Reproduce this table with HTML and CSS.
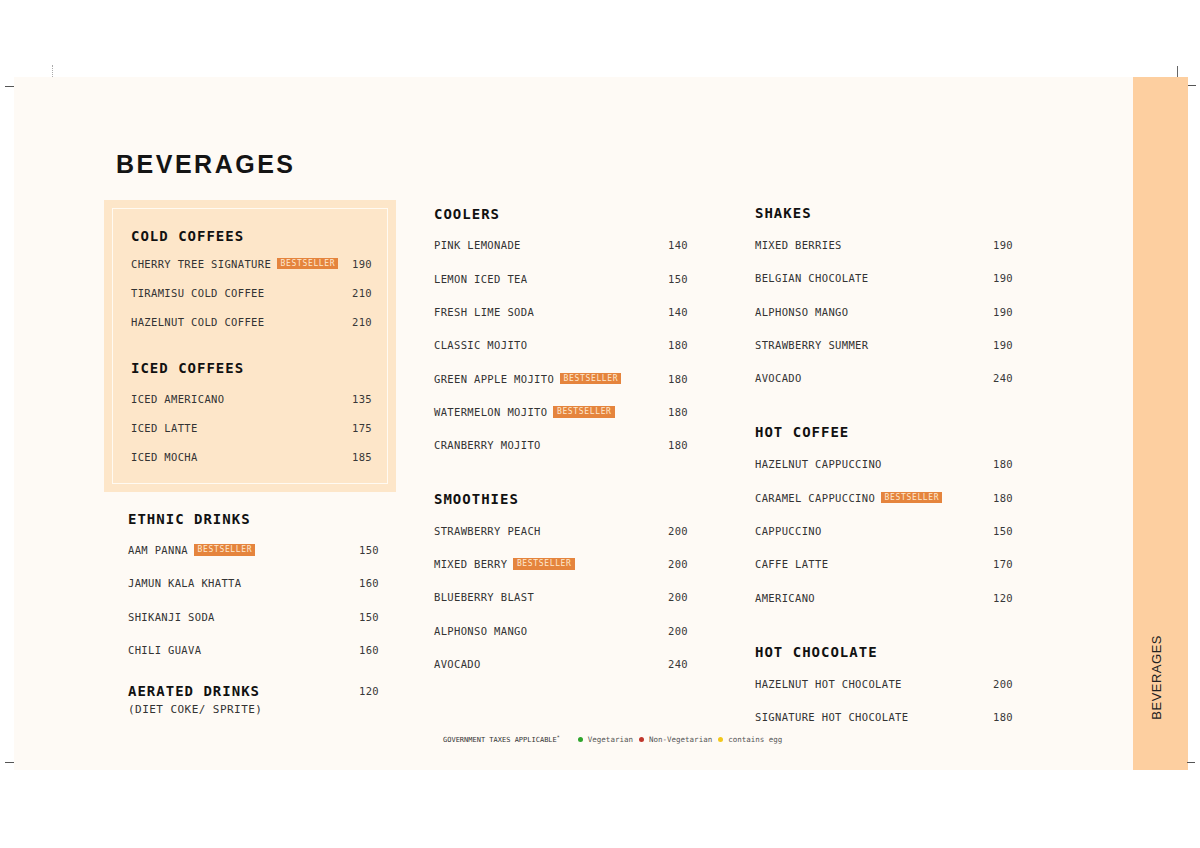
FILE: index.html
```html
<!DOCTYPE html>
<html lang="en">
<head>
<meta charset="utf-8">
<title>Beverages Menu</title>
<link rel="stylesheet" href="styles.css">
</head>
<body>
<div class="sheet">
  <span class="mark mark-h mark-tl-h"></span>
  <span class="mark mark-dot mark-tl-v"></span>
  <span class="mark mark-v mark-tr-v"></span>
  <span class="mark mark-h mark-tr-h"></span>
  <span class="mark mark-h mark-bl-h"></span>
  <span class="mark mark-dot mark-bl-v"></span>
  <span class="mark mark-h mark-br-h"></span>
  <span class="mark mark-v mark-br-v"></span>

  <main class="panel">
    <h1 class="title">BEVERAGES</h1>
    <div class="columns">
      <div class="col col-1">
        <div class="featured">
          <section class="group">
            <h2 class="heading">COLD COFFEES</h2>
            <div class="item"><span class="name">CHERRY TREE SIGNATURE<span class="badge">BESTSELLER</span></span><span class="price">190</span></div>
            <div class="item"><span class="name">TIRAMISU COLD COFFEE</span><span class="price">210</span></div>
            <div class="item"><span class="name">HAZELNUT COLD COFFEE</span><span class="price">210</span></div>
          </section>
          <section class="group">
            <h2 class="heading">ICED COFFEES</h2>
            <div class="item"><span class="name">ICED AMERICANO</span><span class="price">135</span></div>
            <div class="item"><span class="name">ICED LATTE</span><span class="price">175</span></div>
            <div class="item"><span class="name">ICED MOCHA</span><span class="price">185</span></div>
          </section>
        </div>
        <section class="group ethnic">
          <h2 class="heading">ETHNIC DRINKS</h2>
          <div class="item"><span class="name">AAM PANNA<span class="badge">BESTSELLER</span></span><span class="price">150</span></div>
          <div class="item"><span class="name">JAMUN KALA KHATTA</span><span class="price">160</span></div>
          <div class="item"><span class="name">SHIKANJI SODA</span><span class="price">150</span></div>
          <div class="item"><span class="name">CHILI GUAVA</span><span class="price">160</span></div>
        </section>
        <section class="aerated">
          <div class="aerated-row"><h2 class="heading">AERATED DRINKS</h2><span class="price">120</span></div>
          <p class="note">(DIET COKE/ SPRITE)</p>
        </section>
      </div>

      <div class="col col-2">
        <section class="group">
          <h2 class="heading">COOLERS</h2>
          <div class="item"><span class="name">PINK LEMONADE</span><span class="price">140</span></div>
          <div class="item"><span class="name">LEMON ICED TEA</span><span class="price">150</span></div>
          <div class="item"><span class="name">FRESH LIME SODA</span><span class="price">140</span></div>
          <div class="item"><span class="name">CLASSIC MOJITO</span><span class="price">180</span></div>
          <div class="item"><span class="name">GREEN APPLE MOJITO<span class="badge">BESTSELLER</span></span><span class="price">180</span></div>
          <div class="item"><span class="name">WATERMELON MOJITO<span class="badge">BESTSELLER</span></span><span class="price">180</span></div>
          <div class="item"><span class="name">CRANBERRY MOJITO</span><span class="price">180</span></div>
        </section>
        <section class="group">
          <h2 class="heading">SMOOTHIES</h2>
          <div class="item"><span class="name">STRAWBERRY PEACH</span><span class="price">200</span></div>
          <div class="item"><span class="name">MIXED BERRY<span class="badge">BESTSELLER</span></span><span class="price">200</span></div>
          <div class="item"><span class="name">BLUEBERRY BLAST</span><span class="price">200</span></div>
          <div class="item"><span class="name">ALPHONSO MANGO</span><span class="price">200</span></div>
          <div class="item"><span class="name">AVOCADO</span><span class="price">240</span></div>
        </section>
      </div>

      <div class="col col-3">
        <section class="group">
          <h2 class="heading">SHAKES</h2>
          <div class="item"><span class="name">MIXED BERRIES</span><span class="price">190</span></div>
          <div class="item"><span class="name">BELGIAN CHOCOLATE</span><span class="price">190</span></div>
          <div class="item"><span class="name">ALPHONSO MANGO</span><span class="price">190</span></div>
          <div class="item"><span class="name">STRAWBERRY SUMMER</span><span class="price">190</span></div>
          <div class="item"><span class="name">AVOCADO</span><span class="price">240</span></div>
        </section>
        <section class="group">
          <h2 class="heading">HOT COFFEE</h2>
          <div class="item"><span class="name">HAZELNUT CAPPUCCINO</span><span class="price">180</span></div>
          <div class="item"><span class="name">CARAMEL CAPPUCCINO<span class="badge">BESTSELLER</span></span><span class="price">180</span></div>
          <div class="item"><span class="name">CAPPUCCINO</span><span class="price">150</span></div>
          <div class="item"><span class="name">CAFFE LATTE</span><span class="price">170</span></div>
          <div class="item"><span class="name">AMERICANO</span><span class="price">120</span></div>
        </section>
        <section class="group">
          <h2 class="heading">HOT CHOCOLATE</h2>
          <div class="item"><span class="name">HAZELNUT HOT CHOCOLATE</span><span class="price">200</span></div>
          <div class="item"><span class="name">SIGNATURE HOT CHOCOLATE</span><span class="price">180</span></div>
        </section>
      </div>
    </div>

    <footer class="legend">
      <span class="tax">GOVERNMENT TAXES APPLICABLE<sup>*</sup></span>
      <span class="key"><i class="dot dot-veg"></i>Vegetarian</span>
      <span class="key"><i class="dot dot-nonveg"></i>Non-Vegetarian</span>
      <span class="key"><i class="dot dot-egg"></i>contains egg</span>
    </footer>
  </main>

  <aside class="strip"><span class="strip-label">BEVERAGES</span></aside>
</div>
</body>
</html>
```

FILE: styles.css
```css
* { box-sizing: border-box; }

body {
  margin: 0;
  background: #ffffff;
  font-family: "DejaVu Sans Mono", "Liberation Mono", monospace;
  color: #2a2a2a;
}

.sheet {
  position: relative;
  display: flex;
  width: 1174px;
  height: 693px;
  margin: 77px 0 0 14px;
}

/* crop marks */
.mark { position: absolute; display: block; }
.mark-h { height: 1px; width: 9px; background: #555; }
.mark-v { width: 1px; height: 11px; background: #666; }
.mark-dot { width: 0; height: 12px; border-left: 1px dotted #aaaaaa; }
.mark-tl-h { left: -9px; top: 9px; }
.mark-tl-v { left: 38px; top: -12px; }
.mark-tr-v { left: 1163px; top: -11px; }
.mark-tr-h { left: 1174px; top: 8px; width: 8px; }
.mark-bl-h { left: -9px; top: 685px; }
.mark-bl-v { left: 38px; top: 694px; }
.mark-br-h { left: 1173px; top: 685px; width: 8px; }
.mark-br-v { left: 1163px; top: 693px; }

.panel {
  flex: 1;
  display: flex;
  flex-direction: column;
  background: #fefaf5;
  padding: 72px 0 0 90px;
}

.title {
  margin: 0 0 21px 12px;
  font: 700 25px/30px "Liberation Sans", Arial, sans-serif;
  letter-spacing: 2.5px;
  color: #141414;
}

.columns {
  display: flex;
  align-items: flex-start;
}

.col-1 { width: 292px; }
.col-2 { width: 254px; margin-left: 38px; padding-top: 4px; }
.col-3 { width: 258px; margin-left: 67px; padding-top: 3px; }

.featured {
  background: #fde6c9;
  outline: 1.5px solid #fffaf2;
  outline-offset: -9px;
  padding: 26px 24px 19.7px 27px;
}

.heading {
  margin: 0 0 4.6px;
  font: 700 14px/20px "DejaVu Sans Mono", monospace;
  letter-spacing: 1px;
  color: #111;
}

.group + .group { margin-top: 27.5px; }
.col-3 .heading { margin-bottom: 5.2px; }
.col-3 .group + .group { margin-top: 27.6px; }
.featured .heading { margin-bottom: 3px; }
.featured .group + .group { margin-top: 21.5px; }
.featured .group + .group .heading { margin-bottom: 6.3px; }

.item {
  display: flex;
  justify-content: space-between;
  align-items: center;
  height: 33.33px;
  font-size: 10.5px;
  letter-spacing: 0.35px;
  color: #333;
}
.featured .item { height: 29.2px; }

.name {
  display: inline-flex;
  align-items: center;
}

.price { color: #383838; }

.badge {
  display: inline-block;
  margin-left: 6px;
  padding: 0 3px 0 3.5px;
  height: 11.5px;
  line-height: 11.5px;
  font-size: 8px;
  letter-spacing: 0.65px;
  background: #e5843d;
  color: #fde8cf;
}

.ethnic {
  margin-top: 17px;
  padding: 0 17px 0 24px;
}

.aerated {
  margin-top: 14px;
  padding: 0 17px 0 24px;
}

.aerated-row {
  display: flex;
  justify-content: space-between;
  align-items: center;
}
.aerated-row .heading { margin: 0; }
.aerated-row .price { font-size: 10.5px; letter-spacing: 0.35px; }

.note {
  margin: 2px 0 0;
  font-size: 11px;
  line-height: 14px;
  letter-spacing: 0.45px;
  color: #333;
}

.legend {
  display: flex;
  align-items: center;
  height: 10px;
  margin: 0.5px 0 0 339px;
  font-size: 7.5px;
  color: #555;
}
.tax { font-size: 7px; color: #333; margin-right: 18px; }
.tax sup { font-size: 5px; vertical-align: 3px; }
.key { display: inline-flex; align-items: center; margin-right: 6px; }
.dot {
  display: inline-block;
  width: 5px;
  height: 5px;
  border-radius: 50%;
  margin-right: 5px;
}
.dot-veg { background: #2ea52c; }
.dot-nonveg { background: #c0362c; }
.dot-egg { background: #f2c81c; }

.strip {
  width: 55px;
  background: #fdcfa0;
  display: flex;
  flex-direction: column;
  align-items: center;
  justify-content: flex-end;
  padding: 0 8px 50px 0;
}

.strip-label {
  writing-mode: vertical-rl;
  transform: rotate(180deg);
  font: 400 13px/16px "Liberation Sans", Arial, sans-serif;
  letter-spacing: 0.5px;
  color: #222;
}
```
